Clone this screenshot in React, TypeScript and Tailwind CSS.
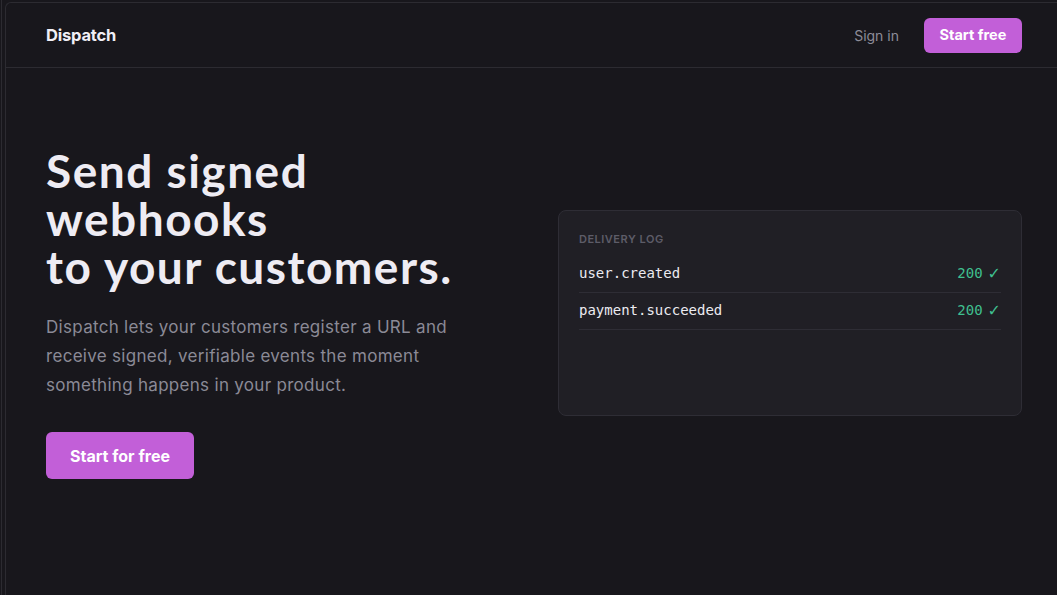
export default function App() {
  const rows = [
    { event: 'user.created', code: '200' },
    { event: 'payment.succeeded', code: '200' },
  ];

  return (
    <div className="min-h-screen w-full bg-[#18171c] overflow-hidden">
      <div className="flex min-h-screen">
        {/* outer frame line */}
        <div className="w-[4px] shrink-0 border-l border-[#2c2b31] ml-px" />
        <div className="flex-1 mt-[2px] border-t border-l border-[#2c2b31] rounded-tl-md min-h-screen">
          {/* Header */}
          <header className="h-[65px] border-b border-[#2c2b31] flex items-center justify-between pl-[40px] pr-[35px]">
            <span className="text-[16.5px] font-bold text-[#f1eff6] font-['Inter',sans-serif] tracking-[-0.2px]">Dispatch</span>
            <nav className="flex items-center gap-[25px]">
              <a className="text-[14px] text-[#8d8c98] font-['Inter',sans-serif] pl-[2px]">Sign in</a>
              <button className="h-[35px] w-[98px] rounded-md bg-[#c25fd8] text-white text-[14.5px] font-bold font-['Inter',sans-serif]">
                Start free
              </button>
            </nav>
          </header>

          {/* Hero */}
          <main className="grid grid-cols-2 gap-12 items-center pl-[40px] pr-[35px] pt-[79px]">
            <div>
              <h1 className="text-[46px] leading-[48px] font-bold text-[#eeecf3] font-['Lato',sans-serif] tracking-[1.5px]">
                Send signed
                <br />
                webhooks
                <br />
                to your customers.
              </h1>
              <p className="mt-[22px] text-[17px] leading-[29px] text-[#8b8a96] font-['Inter',sans-serif] tracking-[0.3px] max-w-[440px]">
                Dispatch lets your customers register a URL and
                <br />
                receive signed, verifiable events the moment
                <br />
                something happens in your product.
              </p>
              <button className="mt-[32px] w-[148px] h-[47px] rounded-md bg-[#c25fd8] text-white text-[16px] font-bold font-['Inter',sans-serif]">
                Start for free
              </button>
            </div>

            <div className="h-[206px] rounded-lg border border-[#2e2d35] bg-[#201f25] px-5 pt-[20px]">
              <p className="text-[11px] font-semibold tracking-[0.5px] uppercase text-[#5d5c68] font-['Inter',sans-serif]">
                Delivery log
              </p>
              <ul className="mt-[8px]">
                {rows.map(r => (
                  <li
                    key={r.event}
                    className="h-[37px] flex items-center justify-between border-b border-[#2e2d35] font-['DejaVu_Sans_Mono',monospace] text-[14px]"
                  >
                    <span className="text-[#ecebf1]">{r.event}</span>
                    <span className="flex items-center gap-[5px] text-[#3fbf8f]">
                      {r.code}
                      <span className="text-[16px] leading-none font-['DejaVu_Sans',sans-serif]">✓</span>
                    </span>
                  </li>
                ))}
              </ul>
            </div>
          </main>
        </div>
      </div>
    </div>
  );
}
